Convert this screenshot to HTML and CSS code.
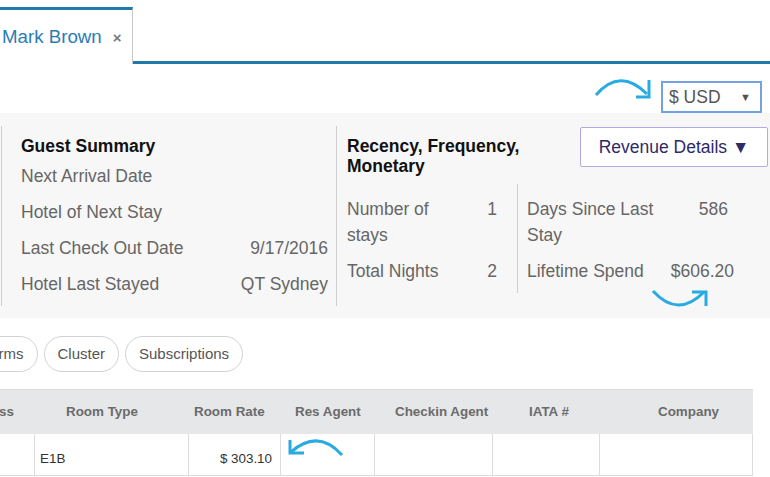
FILE: index.html
```html
<!DOCTYPE html>
<html>
<head>
<meta charset="utf-8">
<link rel="stylesheet" href="styles.css">
</head>
<body>
<div class="page">
  <div class="tabs">
    <div class="tab"><span class="tab-title">Mark Brown</span><span class="tab-close">×</span></div>
    <div class="tab-rest"></div>
  </div>
  <div class="toolbar">
    <div class="select"><span class="select-text">$ USD</span><span class="caret">▼</span></div>
  </div>
  <div class="panel">
    <div class="col guest">
      <div class="heading">Guest Summary</div>
      <div class="row"><span class="label">Next Arrival Date</span><span class="value"></span></div>
      <div class="row"><span class="label">Hotel of Next Stay</span><span class="value"></span></div>
      <div class="row"><span class="label">Last Check Out Date</span><span class="value">9/17/2016</span></div>
      <div class="row"><span class="label">Hotel Last Stayed</span><span class="value">QT Sydney</span></div>
    </div>
    <div class="col rfm">
      <div class="rfm-top">
        <div class="heading rfm-heading">Recency, Frequency, Monetary</div>
        <button class="rev-btn">Revenue Details ▼</button>
      </div>
      <div class="subs">
        <div class="sub sub-left">
          <div class="row"><span class="label narrow">Number of stays</span><span class="value">1</span></div>
          <div class="row"><span class="label narrow">Total Nights</span><span class="value">2</span></div>
        </div>
        <div class="sub sub-right">
          <div class="row"><span class="label wide">Days Since Last Stay</span><span class="value val-days">586</span></div>
          <div class="row"><span class="label wide">Lifetime Spend</span><span class="value val-spend">$606.20</span></div>
        </div>
      </div>
    </div>
  </div>
  <div class="chips">
    <span class="chip chip-clipped">Forms</span>
    <span class="chip">Cluster</span>
    <span class="chip">Subscriptions</span>
  </div>
  <div class="table">
    <div class="thead">
      <div class="th th-first">Class</div>
      <div class="th">Room Type</div>
      <div class="th">Room Rate</div>
      <div class="th">Res Agent</div>
      <div class="th">Checkin Agent</div>
      <div class="th">IATA #</div>
      <div class="th">Company</div>
    </div>
    <div class="tbody">
      <div class="td"></div>
      <div class="td">E1B</div>
      <div class="td td-num">$ 303.10</div>
      <div class="td"></div>
      <div class="td"></div>
      <div class="td"></div>
      <div class="td"></div>
    </div>
  </div>
  <svg class="arrows" width="770" height="477" viewBox="0 0 770 477" xmlns="http://www.w3.org/2000/svg">
    <g fill="none" stroke="#29abe2" stroke-width="3" stroke-linecap="butt">
      <path d="M596,95 Q620,67 647,94"/>
      <path d="M649,80 L649,97 L636,97"/>
      <path d="M653,291 Q678,318.5 704,292"/>
      <path d="M692,292 L706,292 L706,306"/>
      <path d="M342,455 Q318,428.5 291,452"/>
      <path d="M290,440 L290,453 L304,453"/>
    </g>
  </svg>
</div>
</body>
</html>
```

FILE: styles.css
```css
* { box-sizing: border-box; }
html, body { margin: 0; padding: 0; background: #fff; }
body { font-family: "Liberation Sans", Arial, sans-serif; overflow: hidden; }

.page { position: relative; width: 770px; height: 477px; overflow: hidden; }

/* tabs */
.tabs { display: flex; height: 64px; }
.tab {
  margin-top: 7px;
  width: 133px;
  border-top: 3px solid #1f7aab;
  border-right: 1px solid #c8c8c8;
  display: flex;
  align-items: center;
  padding-left: 2px;
  background: #fff;
}
.tab-title { font-size: 18.7px; color: #2a7db3; }
.tab-close { margin-left: 11px; font-size: 15px; font-weight: bold; color: #7a7a7a; }
.tab-rest { flex: 1; border-bottom: 3px solid #1f7aab; }

/* toolbar */
.toolbar { height: 49px; display: flex; justify-content: flex-end; padding-right: 8px; }
.select {
  margin-top: 17px;
  width: 101px;
  height: 32px;
  border: 2px solid #72a2e0;
  display: flex;
  align-items: center;
  justify-content: space-between;
  padding: 0 9px 0 6px;
  background: #fff;
}
.select-text { font-size: 17.5px; color: #555; }
.caret { font-size: 11px; color: #555; }

/* summary panel */
.panel {
  height: 205px;
  background: #f7f7f7;
  display: flex;
  padding-top: 13px;
}
.col { height: 180px; }
.guest {
  margin-left: 1px;
  width: 336px;
  border-left: 1px solid #cfcfcf;
  border-right: 1px solid #cfcfcf;
  padding: 0 8px 0 19px;
}
.heading {
  font-size: 17.5px;
  font-weight: bold;
  color: #111;
  line-height: 20px;
}
.guest .heading { padding-top: 10px; margin-bottom: 2px; }
.row {
  display: flex;
  justify-content: space-between;
  padding: 5px 0;
  line-height: 26px;
  font-size: 17.5px;
  color: #666;
}
.rfm { flex: 1; padding-left: 10px; }
.rfm-top { display: flex; align-items: flex-start; justify-content: space-between; }
.rfm-heading { margin-top: 10px; }
.rev-btn {
  margin-top: 1px;
  margin-right: 2px;
  width: 188px;
  height: 40px;
  flex-shrink: 0;
  border: 1px solid #b3aae3;
  border-radius: 2px;
  background: #fff;
  font-family: "Liberation Sans", Arial, sans-serif;
  font-size: 17.5px;
  color: #2e2a69;
  padding: 0;
}
.subs { display: flex; margin-top: 8px; height: 109px; }
.sub { padding-top: 7px; }
.sub-left { width: 171px; border-right: 1px solid #cfcfcf; padding-right: 20px; }
.sub-right { width: 216px; padding-left: 9px; }
.label.narrow { width: 105px; }
.label.wide { width: 140px; }
.val-days { padding-right: 6px; }

/* chips */
.chips { display: flex; gap: 6px; margin-top: 18px; height: 36px; }
.chip {
  height: 36px;
  line-height: 34px;
  border: 1px solid #d2d2d2;
  border-radius: 18px;
  padding: 0 13px;
  font-size: 15px;
  color: #555;
  background: #fff;
  white-space: nowrap;
}
.chip-clipped { margin-left: -33px; }

/* table */
.table { margin-top: 17px; width: 753px; }
.thead {
  display: grid;
  grid-template-columns: 66px 128px 101px 100px 134px 129px 95px;
  height: 45px;
  background: #e6e7e9;
  border-top: 1px solid #dcdcdc;
  align-items: center;
  padding-bottom: 2px;
}
.th {
  font-size: 13.4px;
  font-weight: bold;
  color: #6b6b6b;
  white-space: nowrap;
}
.th-first { display: flex; justify-content: flex-end; padding-right: 52px; }
.tbody {
  display: grid;
  grid-template-columns: 35px 154px 92px 94px 118px 107px 153px;
  height: 42px;
  border-bottom: 1px solid #dcdcdc;
}
.td {
  border-right: 1px solid #dcdcdc;
  font-size: 13.4px;
  color: #333;
  padding: 17px 5px 0 5px;
}
.td-num { text-align: right; padding-right: 8px; }

/* annotation arrows */
.arrows { position: absolute; left: 0; top: 0; pointer-events: none; }
```
